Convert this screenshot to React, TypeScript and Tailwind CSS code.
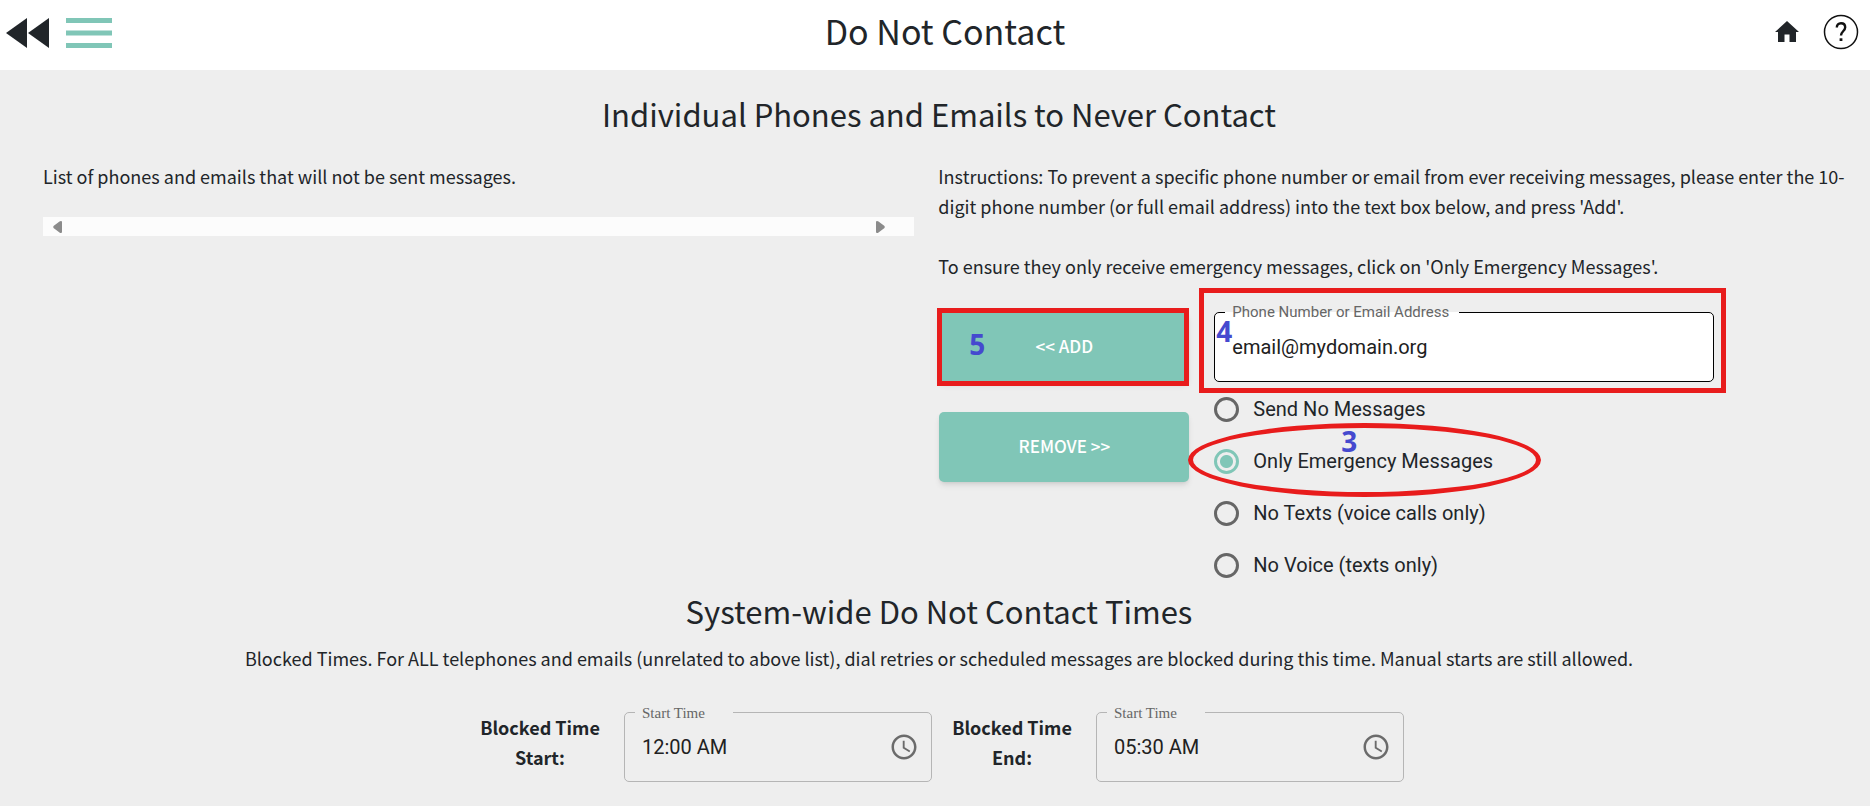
import React, { useState } from "react";

const RADIO_OPTIONS = [
  { value: "none", label: "Send No Messages" },
  { value: "emergency", label: "Only Emergency Messages" },
  { value: "voice", label: "No Texts (voice calls only)" },
  { value: "texts", label: "No Voice (texts only)" },
];

const RewindIcon = () => (
  <svg width="44" height="30" viewBox="0 0 44 30" fill="#212529" aria-hidden="true">
    <path d="M21 0v30L0 15z" />
    <path d="M43 0v30L22 15z" />
  </svg>
);

const MenuIcon = () => (
  <svg width="46" height="30" viewBox="0 0 46 30" fill="#80c6b7" aria-hidden="true">
    <path d="M0 0h46v5H0zM0 12.5h46v5H0zM0 25h46v5H0z" />
  </svg>
);

const HomeIcon = () => (
  <svg width="24" height="22" viewBox="0 0 24 22" fill="#212529" aria-hidden="true">
    <path d="M12 0l12 11h-3v10h-6.500v-7.500h-5V21H3V11H0z" />
  </svg>
);

const HelpIcon = () => (
  <svg width="36" height="36" viewBox="0 0 36 36" fill="none" stroke="#111" aria-hidden="true">
    <circle cx="18" cy="18" r="16.500" strokeWidth="1.500" />
    <path d="M13.800 13.500c0-2.600 1.700-4.300 4.200-4.300s4.200 1.600 4.200 4.100c0 3.800-4.200 4.200-4.200 8.200" strokeWidth="2.400" />
    <path d="M18 24.300v2.700" strokeWidth="2.800" />
  </svg>
);

const ClockIcon = () => (
  <svg width="30" height="30" viewBox="0 0 24 24" fill="#6b6b6b" aria-hidden="true">
    <path d="M11.990 2C6.470 2 2 6.480 2 12s4.470 10 9.990 10C17.520 22 22 17.520 22 12S17.520 2 11.990 2zM12 20c-4.420 0-8-3.580-8-8s3.580-8 8-8 8 3.580 8 8-3.580 8-8 8zm.500-13H11v6l5.250 3.150.750-1.230-4.500-2.670V7z" />
  </svg>
);

function Marker({ className, children }: { className: string; children: React.ReactNode }) {
  return (
    <span
      className={`pointer-events-none absolute z-20 font-['Open_Sans',sans-serif] text-[28px] leading-7 font-bold text-[#4549cf] ${className}`}
    >
      {children}
    </span>
  );
}

function TimeField({ id, title, initial }: { id: string; title: string; initial: string }) {
  const [value, setValue] = useState(initial);

  return (
    <div className="flex items-start gap-6">
      <div className="w-[120px] text-center font-bold">{title}</div>
      <div className="relative flex h-[70px] w-[308px] items-center rounded-[5px] border border-[#b5b5b5] pr-3">
        <span className="absolute -top-px left-2.5 h-px w-[98px] bg-[#eee]" />
        <label
          htmlFor={id}
          className="absolute -top-2.5 left-[17px] font-['Liberation_Serif',serif] text-[15px] leading-5 text-[#666]"
        >
          Start Time
        </label>
        <input
          id={id}
          value={value}
          onChange={e => setValue(e.target.value)}
          className="h-full min-w-0 flex-1 bg-transparent pl-[17px] font-[Roboto,sans-serif] text-xl text-[#212121] outline-none"
        />
        <button type="button" aria-label={`Pick time for ${title}`}>
          <ClockIcon />
        </button>
      </div>
    </div>
  );
}

export default function App() {
  const [contact, setContact] = useState("email@mydomain.org");
  const [mode, setMode] = useState("emergency");

  return (
    <div className="min-h-screen bg-[#eee] font-['Noto_Sans_CJK_SC',sans-serif] text-lg leading-[30px] text-[#212529]">
      <header className="flex h-[70px] items-center bg-white">
        <div className="flex w-[120px] items-center gap-4 pb-1 pl-1.5">
          <button type="button" aria-label="Back">
            <RewindIcon />
          </button>
          <button type="button" aria-label="Menu">
            <MenuIcon />
          </button>
        </div>
        <h1 className="flex-1 pb-2 text-center text-[34px] leading-10">Do Not Contact</h1>
        <div className="flex w-[100px] items-center justify-end gap-6 pr-[11px] pb-[7px]">
          <a href="#home" aria-label="Home">
            <HomeIcon />
          </a>
          <a href="#help" aria-label="Help">
            <HelpIcon />
          </a>
        </div>
      </header>

      <main className="pb-6 pl-2">
        <h2 className="pt-6 text-center text-[31px] leading-10">
          Individual Phones and Emails to Never Contact
        </h2>

        <section className="mt-[27px] grid grid-cols-[48fr_50fr] gap-6 pr-6 pl-[35px]">
          <div>
            <p>List of phones and emails that will not be sent messages.</p>
            <div className="mt-[26px] flex h-[19px] items-center justify-between bg-[#fcfcfc] pr-[29px] pl-2.5">
              <svg width="9" height="12" viewBox="0 0 9 12" fill="#8b8b8b" aria-hidden="true">
                <path d="M9 1v10q0 1-1 1-1 0-1.500-.500L.500 7Q0 6 .500 5L6.500.500Q7 0 8 0q1 0 1 1z" />
              </svg>
              <svg width="9" height="12" viewBox="0 0 9 12" fill="#8b8b8b" aria-hidden="true">
                <path d="M0 1v10q0 1 1 1 1 0 1.500-.500L8.500 7Q9 6 8.500 5L2.500.500Q2 0 1 0 0 0 0 1z" />
              </svg>
            </div>
          </div>

          <div>
            <p>
              Instructions: To prevent a specific phone number or email from ever receiving messages,
              please enter the 10-digit phone number (or full email address) into the text box below,
              and press 'Add'.
            </p>
            <p className="mt-[30px]">
              To ensure they only receive emergency messages, click on 'Only Emergency Messages'.
            </p>

            <div className="mt-[31px] flex gap-[25px] pl-px">
              <div className="flex w-[250px] flex-col gap-[30px]">
                <div className="relative">
                  <button
                    type="button"
                    className="h-[70px] w-full rounded-[5px] bg-[#80c6b7] pb-0.5 text-[17px] font-medium text-white shadow-md"
                  >
                    &lt;&lt; ADD
                  </button>
                  <span className="pointer-events-none absolute -inset-y-1 right-0 -left-0.5 border-[5px] border-[#e81c1c]" />
                  <Marker className="top-[18px] left-[30px]">5</Marker>
                </div>
                <button
                  type="button"
                  className="h-[70px] w-full rounded-[5px] bg-[#80c6b7] pb-0.5 text-[17px] font-medium text-white shadow-md"
                >
                  REMOVE &gt;&gt;
                </button>
              </div>

              <div className="w-[500px] font-[Roboto,sans-serif]">
                <div className="relative">
                  <input
                    id="contact"
                    value={contact}
                    onChange={e => setContact(e.target.value)}
                    className="block h-[70px] w-full rounded-[5px] border border-black bg-white px-[17px] text-xl text-[#212121] outline-none"
                  />
                  <span className="absolute top-0 left-[11px] h-px w-[234px] bg-white" />
                  <label
                    htmlFor="contact"
                    className="absolute -top-2.5 left-[18px] text-[15px] leading-5 text-[#666]"
                  >
                    Phone Number or Email Address
                  </label>
                  <span className="pointer-events-none absolute -top-6 -right-3 -bottom-[11px] -left-[15px] border-[5px] border-[#e81c1c]" />
                  <Marker className="top-[5px] left-0.5">4</Marker>
                </div>

                <div role="radiogroup" aria-label="Message restrictions" className="pt-px">
                  {RADIO_OPTIONS.map(option => (
                    <div key={option.value} className="relative flex h-[52px] items-center">
                      <label className="flex items-center gap-3.5 text-xl">
                        <input
                          type="radio"
                          name="mode"
                          checked={mode === option.value}
                          onChange={() => setMode(option.value)}
                          className="size-[25px] appearance-none rounded-full border-[3px] border-[#666] checked:border-[#80c6b7] checked:bg-[radial-gradient(circle,#80c6b7_6px,transparent_7px)]"
                        />
                        {option.label}
                      </label>
                      {option.value === "emergency" && (
                        <>
                          <span className="pointer-events-none absolute -top-3 -left-[26px] h-[74px] w-[353px] rounded-[50%] border-[5px] border-[#e81c1c]" />
                          <Marker className="-top-2 left-[127px]">3</Marker>
                        </>
                      )}
                    </div>
                  ))}
                </div>
              </div>
            </div>
          </div>
        </section>

        <h2 className="text-center text-[31px] leading-10">System-wide Do Not Contact Times</h2>
        <p className="mt-3 text-center">
          Blocked Times. For ALL telephones and emails (unrelated to above list), dial retries or
          scheduled messages are blocked during this time. Manual starts are still allowed.
        </p>

        <section className="mt-[39px] flex justify-center gap-5 pl-1.5">
          <TimeField id="blocked-start" title="Blocked Time Start:" initial="12:00 AM" />
          <TimeField id="blocked-end" title="Blocked Time End:" initial="05:30 AM" />
        </section>
      </main>
    </div>
  );
}
